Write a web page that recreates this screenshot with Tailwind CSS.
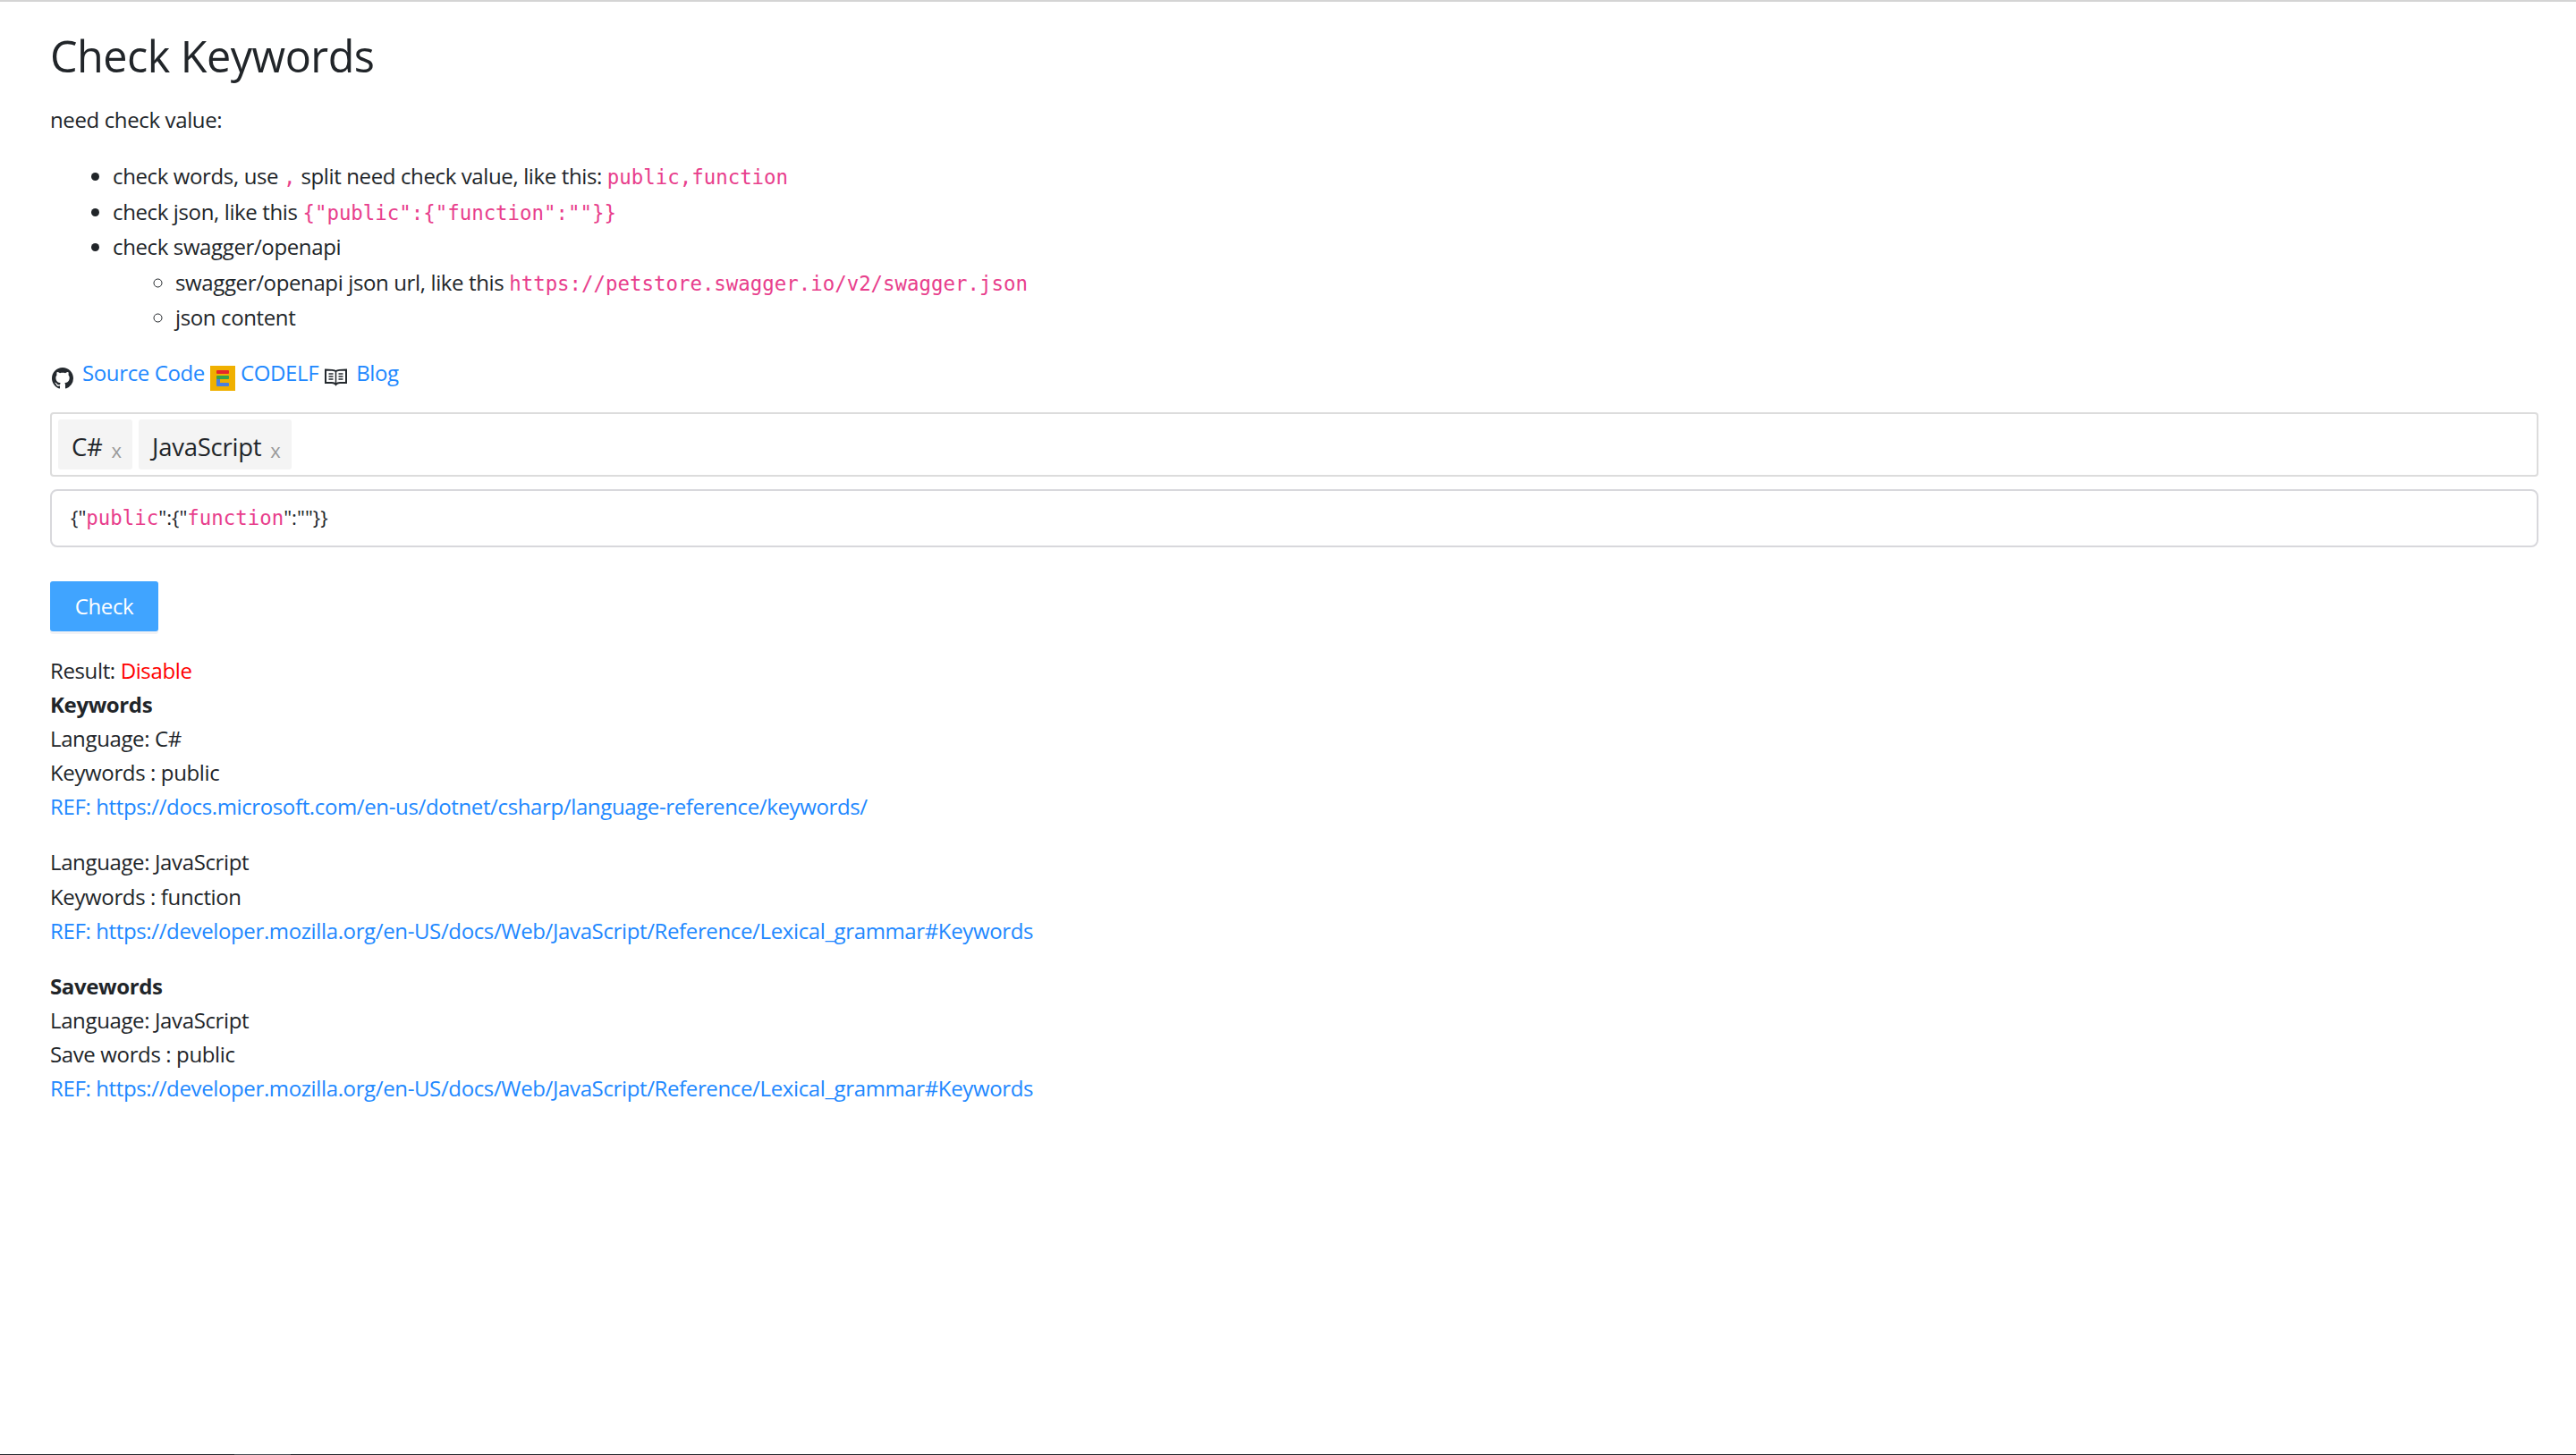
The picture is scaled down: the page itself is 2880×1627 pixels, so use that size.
<!DOCTYPE html>
<html lang="en">
<head>
<meta charset="utf-8">
<title>Check Keywords</title>
<script src="https://cdn.jsdelivr.net/npm/@tailwindcss/browser@4"></script>
</head>
<body class="bg-white">
<div class="flex h-[1627px] flex-col font-['Open_Sans',sans-serif] text-[24px] leading-[38.15px] tracking-[-0.37px] text-[#212529]">
  <div class="h-[2px] bg-[#d4d4d4]"></div>
  <main class="flex-1 px-[56px] pt-[30px] pr-[42px]">
    <h1 class="mb-[23px] text-[48.5px] leading-[60px] font-medium tracking-[-0.5px]">Check Keywords</h1>
    <p class="mb-[24px]">need check value:</p>
    <ul class="mb-[23px] list-disc pl-[70px]">
      <li class="leading-[39.5px]">check words, use <code class="font-['DejaVu_Sans_Mono',monospace] text-[22.4px] leading-none tracking-normal text-[#e83e8c]">,</code> split need check value, like this: <code class="font-['DejaVu_Sans_Mono',monospace] text-[22.4px] leading-none tracking-normal text-[#e83e8c]">public,function</code></li>
      <li class="leading-[39.5px]">check json, like this <code class="font-['DejaVu_Sans_Mono',monospace] text-[22.4px] leading-none tracking-normal text-[#e83e8c]">{"public":{"function":""}}</code></li>
      <li class="leading-[39.5px]">check swagger/openapi
        <ul class="list-[circle] pl-[70px]">
          <li class="leading-[39.5px]">swagger/openapi json url, like this <code class="font-['DejaVu_Sans_Mono',monospace] text-[22.4px] leading-none tracking-normal text-[#e83e8c]">https://petstore.swagger.io/v2/swagger.json</code></li>
          <li class="leading-[39.5px]">json content</li>
        </ul>
      </li>
    </ul>
    <div class="mb-[25px] flex h-[38px] items-center">
      <svg class="mt-[12px] mr-[10px] ml-[2px] h-[24px] w-[24px]" viewBox="0 0 16 16" fill="#24292e"><path d="M8 0C3.58 0 0 3.58 0 8c0 3.54 2.29 6.53 5.47 7.59.4.07.55-.17.55-.38 0-.19-.01-.82-.01-1.49-2.01.37-2.53-.49-2.69-.94-.09-.23-.48-.94-.82-1.13-.28-.15-.68-.52-.01-.53.63-.01 1.08.58 1.23.82.72 1.21 1.87.87 2.33.66.07-.52.28-.87.51-1.07-1.78-.2-3.64-.89-3.64-3.95 0-.87.31-1.59.82-2.15-.08-.2-.36-1.02.08-2.12 0 0 .67-.21 2.2.82.64-.18 1.32-.27 2-.27s1.36.09 2 .27c1.53-1.04 2.2-.82 2.2-.82.44 1.1.16 1.92.08 2.12.51.56.82 1.27.82 2.15 0 3.07-1.87 3.75-3.65 3.95.29.25.54.73.54 1.48 0 1.07-.01 1.93-.01 2.2 0 .21.15.46.55.38A8.01 8.01 0 0 0 16 8c0-4.42-3.58-8-8-8z"/></svg>
      <a class="text-[#2188ff]">Source Code</a>
      <svg class="mt-[12px] mr-[6px] ml-[6px] h-[28px] w-[28px]" viewBox="0 0 28 28"><rect width="28" height="28" fill="#f0b000"/><rect x="7" y="5" width="14" height="4" rx="1" fill="#e5262a"/><rect x="7" y="11" width="14" height="4" rx="1" fill="#37a34a"/><rect x="7" y="15" width="4" height="6" fill="#4a7fe0"/><rect x="7" y="19" width="14" height="4" rx="1" fill="#4a7fe0"/></svg>
      <a class="text-[#2188ff]">CODELF</a>
      <svg class="mt-[11px] mr-[10px] ml-[7px] h-[20px] w-[25px]" viewBox="0 0 25 20" fill="none" stroke="#24292e" stroke-width="2"><path d="M12.500 3 C10 1.500 6 1.500 1 1.500 V16 H8 C10 16 11.500 16.500 12.500 18 C13.500 16.500 15 16 17 16 H24 V1.500 C19 1.500 15 1.500 12.500 3 Z"/><path d="M12.500 3 V18 M4.500 6 H9.500 M4.500 9 H9.500 M4.500 12 H9.500 M15.500 6 H20.500 M15.500 9 H20.500 M15.500 12 H20.500" stroke-width="1.500"/></svg>
      <a class="text-[#2188ff]">Blog</a>
    </div>
    <div class="mb-[14px] flex h-[72px] items-center gap-[7px] rounded-[4px] border-2 border-[#dcdcdc] px-[7px] text-[27.5px] tracking-[-0.25px]">
      <span class="flex h-[56px] items-center rounded-[3px] bg-[#f4f4f4] pt-[6px] pr-[12px] pl-[15px]">C#<span class="mt-[6px] ml-[10px] text-[22px] leading-none tracking-normal text-[#999]">x</span></span>
      <span class="flex h-[56px] items-center rounded-[3px] bg-[#f4f4f4] pt-[6px] pr-[12px] pl-[15px]">JavaScript<span class="mt-[6px] ml-[10px] text-[22px] leading-none tracking-normal text-[#999]">x</span></span>
    </div>
    <div class="mb-[38px] flex h-[65px] items-center rounded-[8px] border-2 border-[#d8d8dc] px-[21px] text-[22.4px] tracking-normal">{"<span class="font-['DejaVu_Sans_Mono',monospace] text-[#e83e8c]">public</span>":{"<span class="font-['DejaVu_Sans_Mono',monospace] text-[#e83e8c]">function</span>":""}}</div>
    <button class="mb-[25px] block h-[56px] w-[121px] rounded-[3px] bg-[#40a4ff] text-center text-white shadow-[0_3px_0_#f2f2f5]">Check</button>
    <p>Result: <span class="text-[#ff0000]">Disable</span></p>
    <p class="font-bold">Keywords</p>
    <p>Language: C#</p>
    <p>Keywords : public</p>
    <p class="mb-[24px]"><a class="text-[#2188ff]">REF: https://docs.microsoft.com/en-us/dotnet/csharp/language-reference/keywords/</a></p>
    <p>Language: JavaScript</p>
    <p>Keywords : function</p>
    <p class="mb-[24px]"><a class="text-[#2188ff]">REF: https://developer.mozilla.org/en-US/docs/Web/JavaScript/Reference/Lexical_grammar#Keywords</a></p>
    <p class="font-bold">Savewords</p>
    <p>Language: JavaScript</p>
    <p>Save words : public</p>
    <p><a class="text-[#2188ff]">REF: https://developer.mozilla.org/en-US/docs/Web/JavaScript/Reference/Lexical_grammar#Keywords</a></p>
  </main>
  <div class="flex h-[1px] bg-[#24292e]"><div class="ml-[262px] w-[63px] bg-[#4a5257]"></div></div>
</div>
</body>
</html>
